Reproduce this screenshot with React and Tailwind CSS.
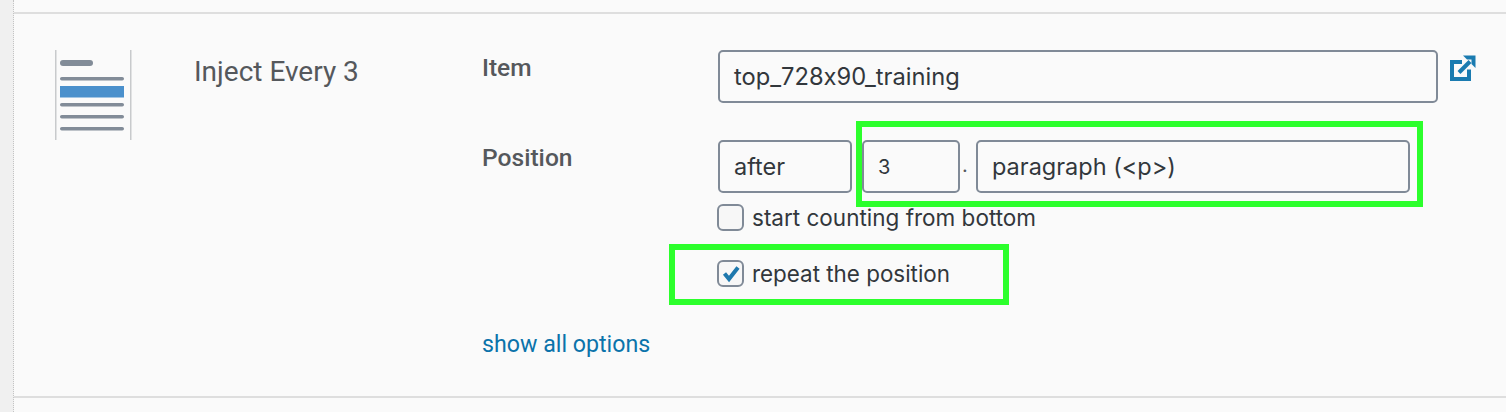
import React from 'react';

const AdIcon = () => (
  <svg width="78" height="91" viewBox="0 0 78 91" className="block">
    <rect x="0" y="0" width="1.5" height="90" fill="#c8cacc" />
    <rect x="75" y="0" width="1.5" height="90" fill="#c8cacc" />
    <rect x="5" y="10" width="33" height="6" rx="3" fill="#828c98" />
    <rect x="5" y="27" width="64" height="3.5" rx="1.75" fill="#828c98" />
    <rect x="5" y="36" width="64" height="11.5" fill="#4a90cc" />
    <rect x="5" y="53" width="64" height="3.5" rx="1.75" fill="#828c98" />
    <rect x="5" y="65" width="64" height="3.5" rx="1.75" fill="#828c98" />
    <rect x="5" y="77" width="64" height="3.5" rx="1.75" fill="#828c98" />
  </svg>
);

const ExternalIcon = () => (
  <svg width="26" height="26" viewBox="0 0 26 26" fill="none" className="block">
    <path d="M12 7H2v17h17V14.5" stroke="#1a7bb0" strokeWidth="4" />
    <path d="M9 17.5L20 6.5" stroke="#1a7bb0" strokeWidth="4" />
    <path d="M13 0.5H25.5V13L21.5 9V4.5H17Z" fill="#1a7bb0" />
  </svg>
);

const Field = ({ value, className }) => (
  <div className={`flex h-[53px] items-center rounded-[5px] border-2 border-[#808a97] px-[14px] text-[#32373c] ${className}`}>
    {value}
  </div>
);

const Checkbox = ({ checked, className }) => (
  <div className={`flex h-[27px] w-[27px] shrink-0 items-center justify-center rounded-[6px] border-2 border-[#808a97] bg-[#f7f7f7] ${className}`}>
    {checked && (
      <svg width="20" height="20" viewBox="0 0 20 20">
        <path d="M3.5 10.5L8 16L17 4.5" fill="none" stroke="#1e78ad" strokeWidth="4" />
      </svg>
    )}
  </div>
);

export default function App() {
  return (
    <div className="relative flex h-[412px] w-[1506px] overflow-hidden bg-[#fafafa] font-['Inter','Roboto',sans-serif] [font-feature-settings:'calt'_0]">
      <div className="w-[13px] shrink-0 border-r border-dotted border-[#c4c4c4] bg-[#f0f0f0] box-content" />

      <div className="flex-1">
        <div className="h-[12px]" />
        <div className="flex h-[386px] border-y-2 border-[#dedede]">
          <div className="w-[41px] shrink-0" />
          <div className="w-[139px] shrink-0 pt-[36px]">
            <AdIcon />
          </div>
          <div className="w-[288px] shrink-0 pt-[41px] font-['Roboto',sans-serif] text-[28px] leading-[34px] text-[#55585c]">
            Inject Every 3
          </div>

          <div className="flex-1">
            <div className="flex h-[93px] pt-[36px]">
              <div className="w-[236px] shrink-0 pt-[4px] font-['Roboto',sans-serif] text-[24.5px] font-medium leading-[28px] text-[#55585c]">
                Item
              </div>
              <Field value="top_728x90_training" className="w-[720px] text-[23.7px]" />
              <div className="ml-[12px] pt-[5px]">
                <ExternalIcon />
              </div>
            </div>

            <div className="flex pt-[33px]">
              <div className="w-[236px] shrink-0 pt-[4px] font-['Roboto',sans-serif] text-[24.6px] font-medium leading-[28px] text-[#55585c]">
                Position
              </div>
              <div>
                <div className="flex items-center">
                  <Field value="after" className="w-[134px] pt-[1px] text-[23.5px]" />
                  <Field value="3" className="ml-[10px] w-[98px] text-[20px]" />
                  <div className="w-[16px] pb-[3px] pl-[2px] text-[20px] text-[#55585c]">.</div>
                  <Field value="paragraph (<p>)" className="w-[434px] pt-[1px] text-[23.5px]" />
                </div>
                <div className="mt-[11px] flex h-[27px] items-center text-[22.5px] text-[#32373c]">
                  <Checkbox className="-ml-[1px]" />
                  <span className="ml-[8px]">start counting from bottom</span>
                </div>
                <div className="mt-[28px] flex h-[28px] items-center text-[22.4px] text-[#32373c]">
                  <Checkbox checked className="-ml-[1px]" />
                  <span className="ml-[8px] pt-[1px]">repeat the position</span>
                </div>
              </div>
            </div>

            <div className="mt-[41px] font-['Roboto',sans-serif] text-[23.2px] leading-[32px] text-[#0b73aa]">
              show all options
            </div>
          </div>
        </div>
      </div>

      {/* green annotation frames drawn over the form */}
      <div className="absolute left-[856px] top-[121px] h-[86px] w-[567px] border-[6px] border-[#2cff2c]" />
      <div className="absolute left-[669px] top-[244px] h-[61px] w-[340px] border-[6px] border-[#2cff2c]" />
    </div>
  );
}
